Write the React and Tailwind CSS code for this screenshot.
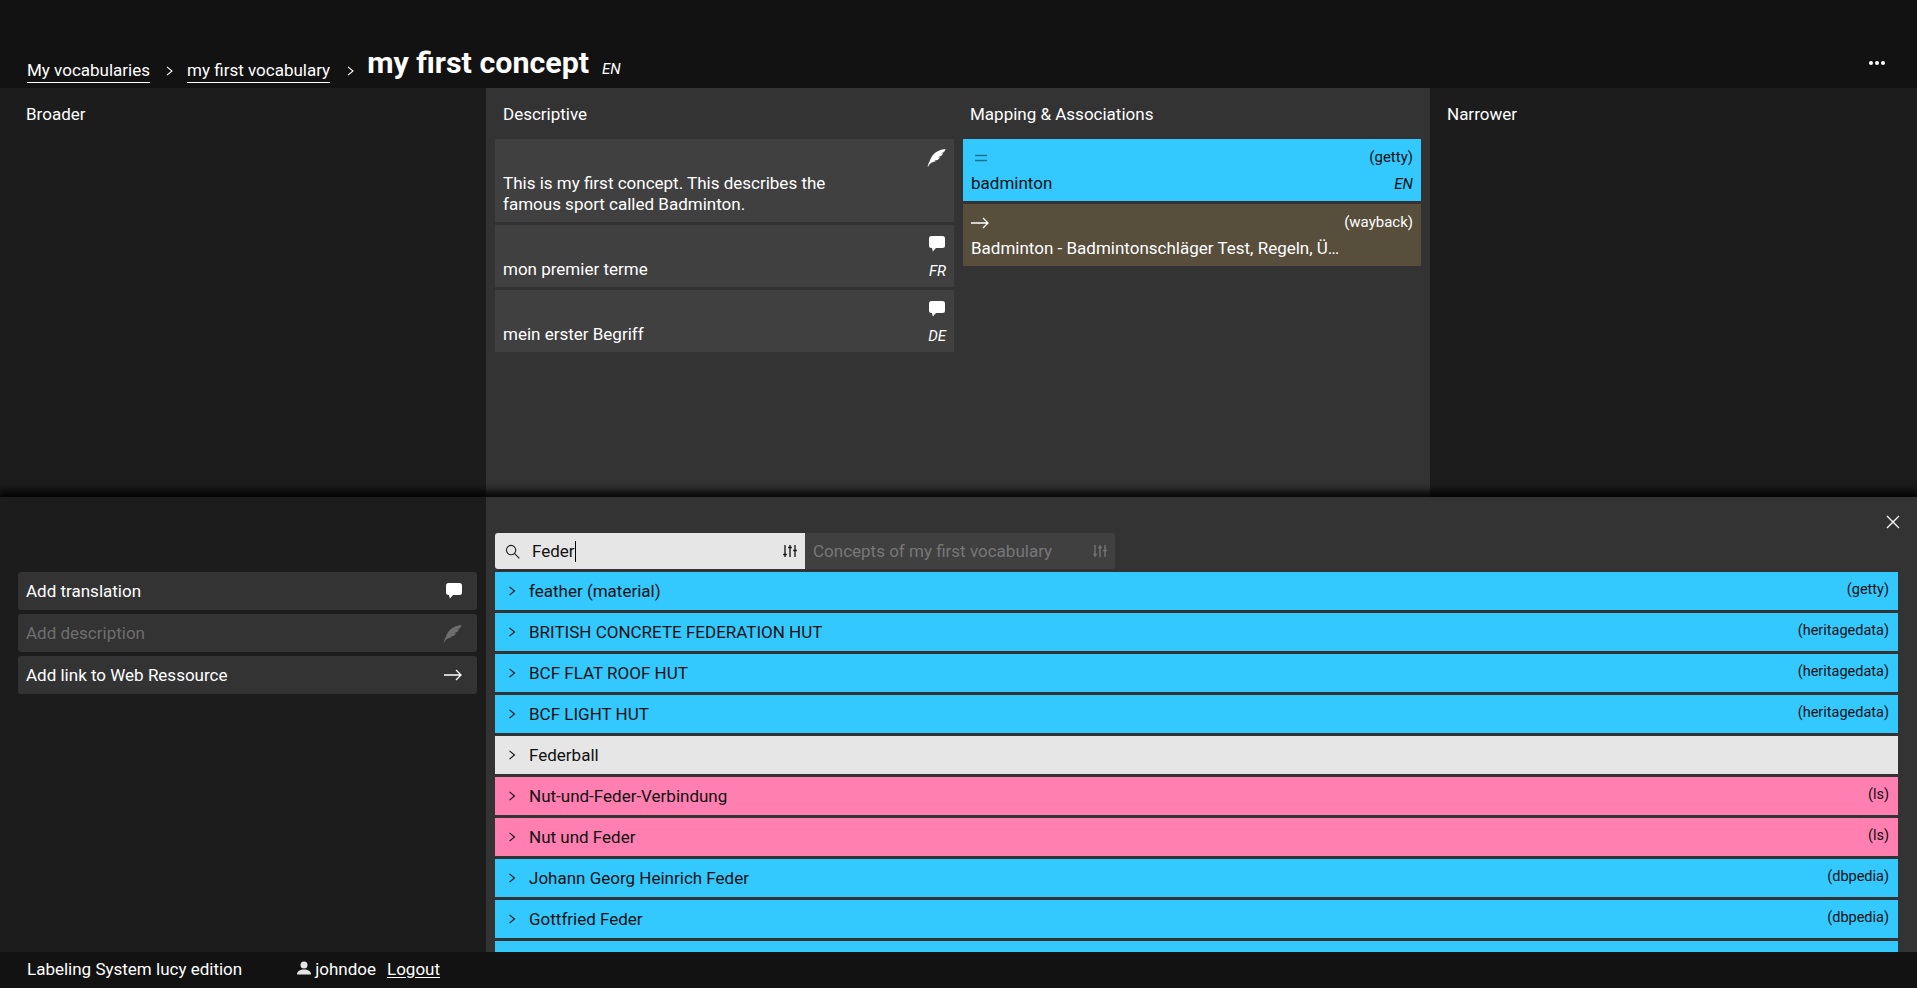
const Feather = ({ className = "" }) => (
  <svg viewBox="0 0 20 20" className={className} fill="currentColor">
    <path d="M.5 19.500C1.300 17.300 2 15.500 3 13.500 4.500 8 9.500 2 19.500 1c-.3 1.500-1 2.600-1.800 3.400l-3.200 1 2.400.1c-.5 1.200-1.200 2.200-2 3l-3.500 1.200 2.400.2c-.8 1.100-1.800 2-2.900 2.700l-3.400.9 1.800.4C8 14 6.500 14.600 5.200 15.200c-1.500.6-2.900 2-3.900 4.300z" />
  </svg>
);

const Bubble = ({ className = "" }) => (
  <svg viewBox="0 0 16 16" className={className} fill="currentColor">
    <path d="M2.500 0h11A2.500 2.500 0 0 1 16 2.500v7a2.500 2.500 0 0 1-2.500 2.500H7l-3.200 3.500L3 12h-.5A2.500 2.500 0 0 1 0 9.500v-7A2.500 2.500 0 0 1 2.500 0z" />
  </svg>
);

const Arrow = ({ className = "" }) => (
  <svg viewBox="0 0 18 12" className={className} fill="none" stroke="currentColor" strokeWidth="1.300">
    <path d="M0 6h17M12 1l5 5-5 5" />
  </svg>
);

const Sliders = ({ className = "" }) => (
  <svg viewBox="0 0 14 14" className={className} fill="none" stroke="currentColor" strokeWidth="1.300">
    <path d="M2 1v12M.2 10.500h3.600M7 1v12M5.200 3.500h3.600M12 1v12M10.200 6.500h3.600" />
  </svg>
);

const Chevron = ({ className = "" }) => (
  <svg viewBox="0 0 8 10" className={className} fill="none" stroke="currentColor" strokeWidth="1.100">
    <path d="M1.500 .8 6.500 5l-5 4.200" />
  </svg>
);

const rows = [
  ["feather (material)", "(getty)", "bg-[#33c9ff]"],
  ["BRITISH CONCRETE FEDERATION HUT", "(heritagedata)", "bg-[#33c9ff]"],
  ["BCF FLAT ROOF HUT", "(heritagedata)", "bg-[#33c9ff]"],
  ["BCF LIGHT HUT", "(heritagedata)", "bg-[#33c9ff]"],
  ["Federball", "", "bg-[#e6e6e6]"],
  ["Nut-und-Feder-Verbindung", "(ls)", "bg-[#ff7fb0]"],
  ["Nut und Feder", "(ls)", "bg-[#ff7fb0]"],
  ["Johann Georg Heinrich Feder", "(dbpedia)", "bg-[#33c9ff]"],
  ["Gottfried Feder", "(dbpedia)", "bg-[#33c9ff]"],
  ["", "", "bg-[#33c9ff]"],
];

function DescCard({ icon, lang, children, tall }) {
  return (
    <div className={`bg-[#404040] px-[8px] flex flex-col ${tall ? "h-[83px]" : "h-[62px]"}`}>
      <div className={`flex justify-end h-[34px] ${tall ? "pt-[9px]" : "pt-[11px]"}`}>{icon}</div>
      <div className="flex justify-between items-start">
        <div className={`text-[17px] leading-[21px] ${tall ? "w-[350px]" : ""}`}>{children}</div>
        {lang && <span className="italic text-[15px] leading-[25px]">{lang}</span>}
      </div>
    </div>
  );
}

function AddButton({ label, icon, dim }) {
  return (
    <div className={`h-[38px] bg-[#333333] rounded-[3px] flex items-center justify-between pl-[8px] pr-[15px] text-[17px] ${dim ? "text-[#6e6e6e]" : "text-white"}`}>
      <span className="pt-[1px]">{label}</span>
      {icon}
    </div>
  );
}

export default function App() {
  return (
    <div className="h-[988px] w-full overflow-hidden flex flex-col bg-[#121212] text-white font-['Roboto',sans-serif]">
      <header className="h-[88px] shrink-0 bg-[#121212] flex items-end pl-[27px] pr-[30px] relative">
        <a className="text-[17px] leading-[20px] border-b-[1px] border-white mb-[5px] pb-[2px]">My vocabularies</a>
        <Chevron className="w-[9px] h-[10px] ml-[15px] mb-[12px] mr-[13px]" />
        <a className="text-[17px] leading-[20px] border-b-[1px] border-white mb-[5px] pb-[2px]">my first vocabulary</a>
        <Chevron className="w-[9px] h-[10px] ml-[16px] mb-[12px] mr-[12px]" />
        <span className="text-[30.400px] leading-[36px] font-bold mb-[7px]">my first concept</span>
        <span className="italic text-[15px] leading-[20px] ml-[13px] mb-[9px]">EN</span>
        <div className="ml-auto mb-[23px] flex gap-[2px] mr-[2px]">
          <i className="block w-[4px] h-[4px] rounded-full bg-white" />
          <i className="block w-[4px] h-[4px] rounded-full bg-white" />
          <i className="block w-[4px] h-[4px] rounded-full bg-white" />
        </div>
      </header>

      <section className="h-[409px] shrink-0 flex">
        <div className="w-[486px] bg-[#1c1c1c] pl-[26px] pt-[16px]">
          <h2 className="text-[17px] leading-[20px]">Broader</h2>
        </div>
        <div className="w-[472px] bg-[#333333] pl-[9px] pr-[4px] pt-[16px]">
          <h2 className="text-[17px] leading-[20px] pl-[8px] mb-[15px]">Descriptive</h2>
          <div className="flex flex-col gap-[3px]">
            <DescCard tall icon={<Feather className="w-[19px] h-[19px] text-white" />}>
              This is my first concept. This describes the famous sport called Badminton.
            </DescCard>
            <DescCard lang="FR" icon={<Bubble className="w-[16px] h-[16px] text-white mr-[1px]" />}>mon premier terme</DescCard>
            <DescCard lang="DE" icon={<Bubble className="w-[16px] h-[16px] text-white mr-[1px]" />}>mein erster Begriff</DescCard>
          </div>
        </div>
        <div className="w-[472px] bg-[#333333] pl-[5px] pr-[9px] pt-[16px]">
          <h2 className="text-[17px] leading-[20px] pl-[7px] mb-[15px]">Mapping &amp; Associations</h2>
          <div className="flex flex-col gap-[3px]">
            <div className="h-[62px] bg-[#33c9ff] text-[#111] px-[8px] pt-[7px]">
              <div className="flex justify-between items-center h-[23px]">
                <svg viewBox="0 0 12 8" className="w-[12px] h-[8px] ml-[4px] text-[#1b6f8e]" fill="none" stroke="currentColor" strokeWidth="1.300"><path d="M0 1.500h12M0 6.500h12" /></svg>
                <span className="text-[15px]">(getty)</span>
              </div>
              <div className="flex justify-between items-center mt-[4px] h-[21px]">
                <span className="text-[17px]">badminton</span>
                <span className="italic text-[15px] pt-[2px]">EN</span>
              </div>
            </div>
            <div className="h-[62px] bg-[#574e3c] px-[8px] pt-[7px]">
              <div className="flex justify-between items-center h-[23px]">
                <Arrow className="w-[18px] h-[12px]" />
                <span className="text-[15px]">(wayback)</span>
              </div>
              <div className="mt-[4px] h-[21px] leading-[21px] text-[17px]">Badminton - Badmintonschläger Test, Regeln, Ü…</div>
            </div>
          </div>
        </div>
        <div className="flex-1 bg-[#1c1c1c] pl-[17px] pt-[16px]">
          <h2 className="text-[17px] leading-[20px]">Narrower</h2>
        </div>
      </section>

      <section className="flex-1 min-h-0 flex relative overflow-hidden shadow-[0_-3px_8px_3px_rgba(0,0,0,0.9)] z-10">
        <aside className="w-[486px] shrink-0 bg-[#1c1c1c] pl-[18px] pr-[9px] pt-[75px] flex flex-col gap-[4px]">
          <AddButton label="Add translation" icon={<Bubble className="w-[16px] h-[16px] text-white" />} />
          <AddButton dim label="Add description" icon={<Feather className="w-[19px] h-[19px] text-[#6e6e6e]" />} />
          <AddButton label="Add link to Web Ressource" icon={<Arrow className="w-[18px] h-[12px] text-white" />} />
        </aside>
        <div className="flex-1 bg-[#333333] pl-[9px] pr-[19px] pt-[36px] relative">
          <svg viewBox="0 0 14 14" className="absolute right-[17px] top-[18px] w-[14px] h-[14px] text-white" fill="none" stroke="currentColor" strokeWidth="1.400"><path d="M1 1l12 12M13 1 1 13" /></svg>
          <div className="flex h-[36px] mb-[3px]">
            <div className="w-[310px] bg-[#e6e6e6] text-[#111] rounded-l-[3px] flex items-center pl-[10px] pr-[8px]">
              <svg viewBox="0 0 16 16" className="w-[15px] h-[15px] text-[#222]" fill="none" stroke="currentColor" strokeWidth="1.200"><circle cx="6.500" cy="6.500" r="5" /><path d="m10.300 10.300 5 5" /></svg>
              <span className="ml-[12px] text-[17px] border-r border-black leading-[21px] mt-[1px]">Feder</span>
              <Sliders className="w-[14px] h-[14px] ml-auto text-[#111]" />
            </div>
            <div className="w-[310px] bg-[#404040] text-[#777] rounded-r-[3px] flex items-center pl-[8px] pr-[8px]">
              <span className="text-[17px] mt-[1px]">Concepts of my first vocabulary</span>
              <Sliders className="w-[14px] h-[14px] ml-auto text-[#777]" />
            </div>
          </div>
          <div className="flex flex-col gap-[3px]">
            {rows.map(([label, source, bg], i) => (
              <div key={i} className={`h-[38px] shrink-0 ${bg} text-[#111] flex items-center pl-[13px] pr-[9px]`}>
                <Chevron className="w-[8px] h-[10px] mb-[1px]" />
                <span className="ml-[13px] text-[17px] mt-[2px]">{label}</span>
                <span className="ml-auto text-[14.500px] mb-[2px]">{source}</span>
              </div>
            ))}
          </div>
        </div>
      </section>

      <footer className="h-[36px] shrink-0 bg-[#121212] flex items-center pl-[27px] text-[17px] relative z-20">
        <span>Labeling System lucy edition</span>
        <svg viewBox="0 0 14 14" className="w-[14px] h-[14px] ml-[55px] mb-[5px] text-[#e6e6e6]" fill="currentColor"><circle cx="7" cy="4" r="3.500" /><path d="M0 13.500c0-3.500 3-5 7-5s7 1.500 7 5z" /></svg>
        <span className="ml-[4px]">johndoe</span>
        <a className="ml-[11px] underline underline-offset-2">Logout</a>
      </footer>
    </div>
  );
}
